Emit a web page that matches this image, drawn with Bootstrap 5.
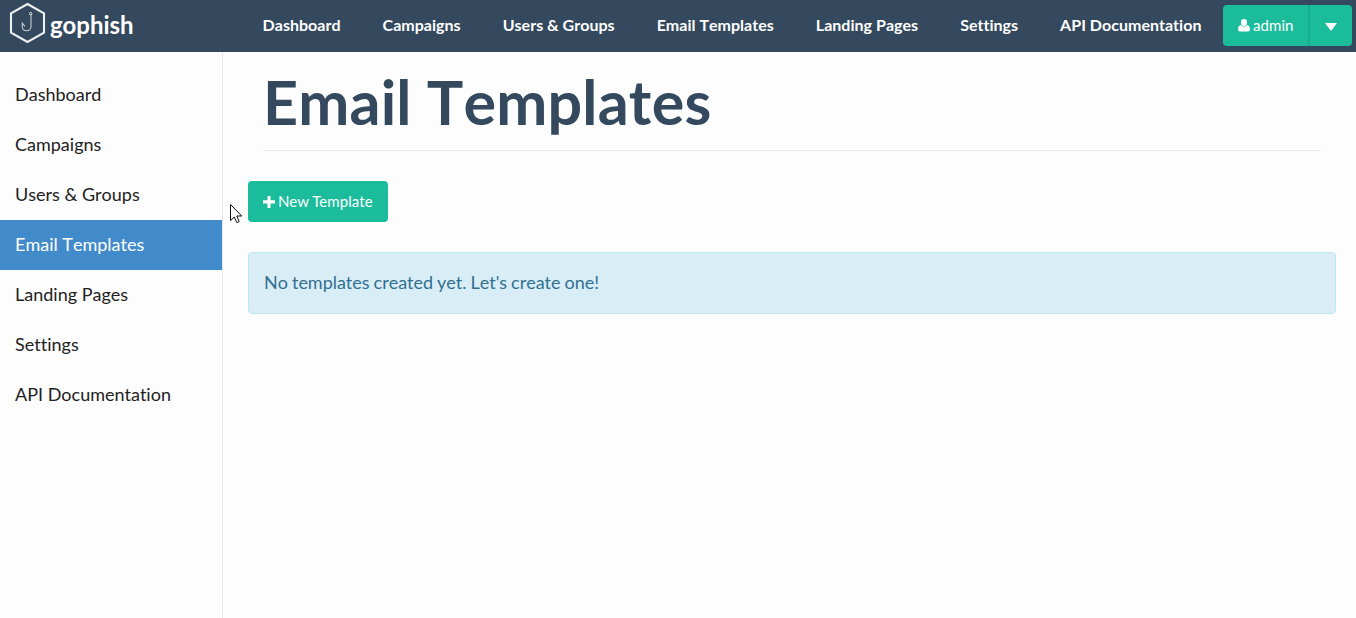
<!DOCTYPE html>
<html lang="en">
<head>
<meta charset="utf-8">
<meta name="viewport" content="width=device-width, initial-scale=1">
<title>Gophish - Email Templates</title>
<link href="https://cdn.jsdelivr.net/npm/bootstrap@5.3.0/dist/css/bootstrap.min.css" rel="stylesheet">
<style>
body{font-family:Lato,"Liberation Sans",sans-serif;font-size:18px;line-height:30px;color:#34495e;background:#fdfdfd;height:100vh;overflow:hidden;font-kerning:none;font-variant-ligatures:none}
.topbar{height:52px;background:#34495e;padding:0 4px 0 9px}
.brand-text{width:83px;font-size:24px;font-weight:700;letter-spacing:-.05px;line-height:50px;margin-left:4px}
.main-nav{margin-left:108.6px}
.main-nav .nav-link{font-size:16px;font-weight:700;line-height:50px;color:#fff;padding:0 21px;white-space:nowrap;letter-spacing:.02px}
.btn-teal{--bs-btn-color:#fff;--bs-btn-bg:#1abc9c;--bs-btn-hover-color:#fff;--bs-btn-hover-bg:#48c9b0;--bs-btn-border-width:0;--bs-btn-font-size:15px;--bs-btn-line-height:21px;--bs-btn-border-radius:4px;--bs-btn-padding-y:10px;--bs-btn-padding-x:15px;height:41px;letter-spacing:.07px}
.user-group{margin-top:5px}
.user-btn{width:86px}
.user-menu{width:44px;border-left:2px solid #18ac8f!important}
.new-btn{width:140px}
.icon-gap{margin-right:3px}
.caret-icon{margin-top:3px}
.sidebar{width:223px;border-right:1px solid #e8e8e8;padding-top:18px}
.sidebar .nav-link{height:50px;padding:9px 15px 11px;color:#222;border-radius:0}
.sidebar .nav-link.active{background:#428bca;color:#fff}
.content{padding:0 20px 0 25px}
.page-title{margin:0 15px 30px;height:99px;border-bottom:1px solid #e7e9ec;font-size:61px;line-height:67px;font-weight:700;padding-top:16px;letter-spacing:.18px}
.notice{margin-top:30px;height:62px;padding:14px 15px 16px;background:#d9edf7;border:1px solid #bce8f1;border-radius:4px;color:#31708f;letter-spacing:-.03px;word-spacing:-.5px}
.pointer{left:230px;top:204px}
</style>
</head>
<body class="d-flex flex-column">
<header class="topbar d-flex flex-shrink-0">
  <a class="d-flex text-white text-decoration-none" href="#">
    <svg width="37" height="43" viewBox="0 0 37 43" fill="none" stroke="#ecf0f1">
      <path d="M18.5 4 35 13.3V32.7L18.5 42 2 32.7V13.3Z" stroke-width="2.1"/>
      <circle cx="21.7" cy="13.6" r="1.2" stroke-width="1"/>
      <path d="M22 15V27a4.4 4.4 0 0 1-8.7 0V23l2.7 3.5" stroke-width="1.1" stroke="#c5ced4"/>
    </svg>
    <span class="brand-text">gophish</span>
  </a>
  <nav class="nav main-nav flex-nowrap">
    <a class="nav-link" href="#">Dashboard</a>
    <a class="nav-link" href="#">Campaigns</a>
    <a class="nav-link" href="#">Users &amp; Groups</a>
    <a class="nav-link" href="#">Email Templates</a>
    <a class="nav-link" href="#">Landing Pages</a>
    <a class="nav-link" href="#">Settings</a>
    <a class="nav-link" href="#">API Documentation</a>
  </nav>
  <div class="btn-group user-group ms-auto align-self-start">
    <button class="btn btn-teal user-btn d-flex align-items-center flex-grow-0 text-nowrap" type="button">
      <svg class="flex-shrink-0 icon-gap" width="12" height="13" viewBox="0 0 12 13" fill="#fff"><ellipse cx="6" cy="3.5" rx="3.1" ry="3.4"/><path d="M2.8 6Q6 9.2 9.2 6 12 6.7 12 10.5 12 12.5 10 12.5H2Q0 12.5 0 10.5 0 6.7 2.8 6Z"/></svg>admin
    </button>
    <button class="btn btn-teal user-menu d-flex align-items-center justify-content-center flex-grow-0 p-0" type="button" aria-label="Account menu">
      <svg class="caret-icon" width="12" height="8" viewBox="0 0 12 8" fill="#fff"><path d="M0 0H12L6 8Z"/></svg>
    </button>
  </div>
</header>
<div class="d-flex flex-grow-1">
  <nav class="sidebar nav nav-pills flex-column flex-nowrap flex-shrink-0">
    <a class="nav-link" href="#">Dashboard</a>
    <a class="nav-link" href="#">Campaigns</a>
    <a class="nav-link" href="#">Users &amp; Groups</a>
    <a class="nav-link active" href="#">Email Templates</a>
    <a class="nav-link" href="#">Landing Pages</a>
    <a class="nav-link" href="#">Settings</a>
    <a class="nav-link" href="#">API Documentation</a>
  </nav>
  <main class="content flex-grow-1">
    <h1 class="page-title">Email Templates</h1>
    <button class="btn btn-teal new-btn d-flex align-items-center text-nowrap" type="button">
      <svg class="icon-gap flex-shrink-0" width="12" height="12" viewBox="0 0 12 12" fill="#fff"><path d="M4.5 0H7.5V4.3H12V7.5H7.5V12H4.5V7.5H0V4.3H4.5Z"/></svg>New Template
    </button>
    <div class="notice" role="alert">No templates created yet. Let's create one!</div>
  </main>
</div>
<svg class="pointer position-absolute" width="13" height="20" viewBox="0 0 13 20"><path d="M.5.5V16.5L4.3 13 6.8 18.6 9.2 17.5 6.8 12H11.8Z" fill="#fff" stroke="#111"/></svg>
</body>
</html>
